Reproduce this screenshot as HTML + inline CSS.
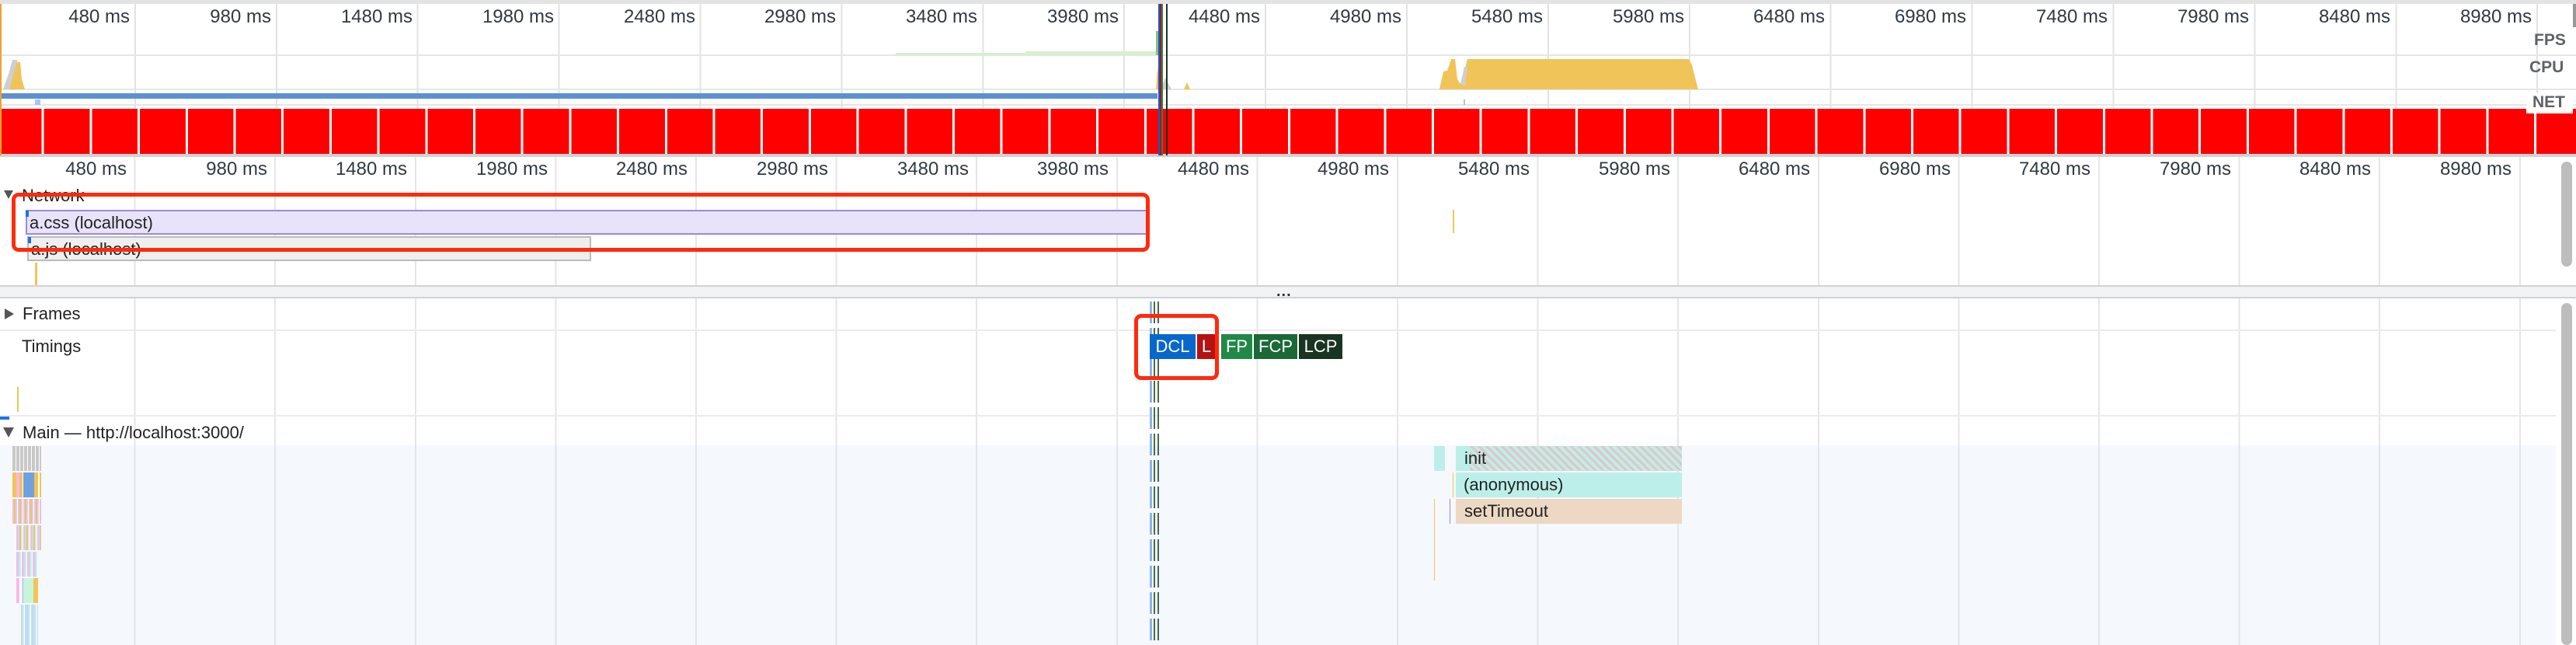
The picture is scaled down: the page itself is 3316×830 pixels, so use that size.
<!DOCTYPE html>
<html><head><meta charset="utf-8"><style>
*{margin:0;padding:0;box-sizing:border-box}
body{width:3316px;height:830px;overflow:hidden;background:#fff;position:relative;font-family:"Liberation Sans",sans-serif;color:#333}
.a{position:absolute}
.lbl{position:absolute;font-size:24px;color:#303942;text-align:right;width:120px;line-height:24px}
.t{font-size:22px;color:#222;position:absolute;line-height:24px}
.mk{position:absolute;top:430px;height:32px;color:#fff;font-size:22px;line-height:32px;text-align:center}
</style></head><body>
<!-- top border -->
<div class="a" style="left:0;top:0;width:3316px;height:5px;background:#e3e3e3"></div>
<!-- overview grid -->
<div class="a" style="left:-6.9px;top:5px;width:3300px;height:195px;background:repeating-linear-gradient(to right,transparent 0 179.9px,#e2e2e2 179.9px 181.9px)"></div>
<div class="a" style="left:0;top:70px;width:3316px;height:2px;background:#e6e6e6"></div>
<div class="a" style="left:0;top:114px;width:3316px;height:2px;background:#e6e6e6"></div>
<div class="a" style="left:0;top:134px;width:3316px;height:2px;background:#e6e6e6"></div>
<!-- top labels -->
<div class="lbl" style="left:47px;top:10px">480 ms</div>
<div class="lbl" style="left:229px;top:10px">980 ms</div>
<div class="lbl" style="left:411px;top:10px">1480 ms</div>
<div class="lbl" style="left:593px;top:10px">1980 ms</div>
<div class="lbl" style="left:775px;top:10px">2480 ms</div>
<div class="lbl" style="left:956px;top:10px">2980 ms</div>
<div class="lbl" style="left:1138px;top:10px">3480 ms</div>
<div class="lbl" style="left:1320px;top:10px">3980 ms</div>
<div class="lbl" style="left:1502px;top:10px">4480 ms</div>
<div class="lbl" style="left:1684px;top:10px">4980 ms</div>
<div class="lbl" style="left:1866px;top:10px">5480 ms</div>
<div class="lbl" style="left:2048px;top:10px">5980 ms</div>
<div class="lbl" style="left:2229px;top:10px">6480 ms</div>
<div class="lbl" style="left:2411px;top:10px">6980 ms</div>
<div class="lbl" style="left:2593px;top:10px">7480 ms</div>
<div class="lbl" style="left:2775px;top:10px">7980 ms</div>
<div class="lbl" style="left:2957px;top:10px">8480 ms</div>
<div class="lbl" style="left:3139px;top:10px">8980 ms</div>
<!-- FPS green -->
<div class="a" style="left:1153px;top:68px;width:337px;height:3px;background:#d6f0d0"></div>
<div class="a" style="left:1320px;top:66px;width:170px;height:5px;background:#d6f0d0"></div>
<div class="a" style="left:1488px;top:40px;width:3px;height:31px;background:#7dc77d"></div>
<!-- CPU -->
<svg class="a" style="left:0;top:72px" width="3316" height="44">
<path d="M4,43 L12,20 L16,5 L22,5 L30,43Z" fill="#cfcfcf"/>
<path d="M12,43 L18,22 L22,8 L26,8 L28,30 L32,43Z" fill="#f0c458"/>
<path d="M1488,43 L1490,15 L1494,43Z" fill="#f0c458"/>
<path d="M1494,43 L1500,28 L1508,43Z" fill="#cfcfcf"/>
<path d="M1524,43 L1528,34 L1532,43Z" fill="#f0c458"/>
<path d="M1853,43 L1858,20 L1863,19 L1868,4 L1873,4 L1876,30 L1880,36 L1885,20 L1889,4 L2174,4 L2178,12 L2186,43Z" fill="#f0c458"/>
<path d="M1880,36 L1885,14 L1889,14 L1886,40Z" fill="#cfcfcf"/>
</svg>
<!-- NET -->
<div class="a" style="left:0;top:120px;width:1490px;height:7px;background:#5b8fd6"></div>
<div class="a" style="left:45px;top:128px;width:7px;height:7px;background:#a6c6f5"></div>
<div class="a" style="left:1884px;top:128px;width:2px;height:7px;background:#a6c6f5"></div>
<!-- screenshots -->
<div class="a" style="left:0;top:140px;width:3316px;height:58px;background:repeating-linear-gradient(to right,#ff0000 0 58.7px,#fff 58.7px 61.7px);background-position:-5px 0"></div>
<div class="a" style="left:0;top:198px;width:3316px;height:4px;background:#d0d3d6"></div>
<div class="a" style="left:0;top:5px;width:2px;height:195px;background:#f0a030"></div>
<!-- track labels -->
<div class="a" style="left:3262px;top:40px;font-weight:bold;font-size:21px;color:#5f6368">FPS</div>
<div class="a" style="left:3256px;top:75px;font-weight:bold;font-size:21px;color:#5f6368">CPU</div>
<div class="a" style="left:3252px;top:120px;width:60px;height:26px;background:#fff"></div>
<div class="a" style="left:3260px;top:120px;font-weight:bold;font-size:21px;color:#5f6368">NET</div>
<div class="a" style="left:3312px;top:5px;width:4px;height:30px;background:#999"></div>
<!-- selection lines -->
<div class="a" style="left:1491px;top:5px;width:2px;height:195px;background:#1a56d6"></div>
<div class="a" style="left:1493px;top:5px;width:2px;height:195px;background:#b31412"></div>
<div class="a" style="left:1495px;top:5px;width:2px;height:195px;background:#228847"></div>
<div class="a" style="left:1501px;top:5px;width:2px;height:195px;background:#1a3422"></div>
<!-- lower grid -->
<div class="a" style="left:-5.6px;top:202px;width:3300px;height:166px;background:repeating-linear-gradient(to right,transparent 0 178.6px,#e6e6e6 178.6px 180.6px)"></div>
<div class="a" style="left:-5.6px;top:383px;width:3300px;height:447px;background:repeating-linear-gradient(to right,transparent 0 178.6px,#e6e6e6 178.6px 180.6px)"></div>
<!-- second ruler -->
<div class="lbl" style="left:43px;top:206px">480 ms</div>
<div class="lbl" style="left:224px;top:206px">980 ms</div>
<div class="lbl" style="left:404px;top:206px">1480 ms</div>
<div class="lbl" style="left:585px;top:206px">1980 ms</div>
<div class="lbl" style="left:765px;top:206px">2480 ms</div>
<div class="lbl" style="left:946px;top:206px">2980 ms</div>
<div class="lbl" style="left:1127px;top:206px">3480 ms</div>
<div class="lbl" style="left:1307px;top:206px">3980 ms</div>
<div class="lbl" style="left:1488px;top:206px">4480 ms</div>
<div class="lbl" style="left:1668px;top:206px">4980 ms</div>
<div class="lbl" style="left:1849px;top:206px">5480 ms</div>
<div class="lbl" style="left:2030px;top:206px">5980 ms</div>
<div class="lbl" style="left:2210px;top:206px">6480 ms</div>
<div class="lbl" style="left:2391px;top:206px">6980 ms</div>
<div class="lbl" style="left:2571px;top:206px">7480 ms</div>
<div class="lbl" style="left:2752px;top:206px">7980 ms</div>
<div class="lbl" style="left:2932px;top:206px">8480 ms</div>
<div class="lbl" style="left:3113px;top:206px">8980 ms</div>
<div class="a" style="left:3297px;top:208px;width:14px;height:135px;border-radius:7px;background:#bdbdbd"></div>
<!-- network -->
<div class="a" style="left:5px;top:245px;width:0;height:0;border-left:6px solid transparent;border-right:6px solid transparent;border-top:11px solid #555"></div>
<div class="t" style="left:28px;top:240px">Network</div>
<div class="a" style="left:33px;top:270px;width:1444px;height:32px;background:#e8e3f8;border:2px solid #9d87dc"></div>
<div class="a" style="left:33px;top:271px;width:4px;height:8px;background:#1a73e8"></div>
<div class="t" style="left:38px;top:275px">a.css (localhost)</div>
<div class="a" style="left:35px;top:304px;width:726px;height:32px;background:#efefef;border:2px solid #bbb"></div>
<div class="a" style="left:36px;top:305px;width:4px;height:8px;background:#1a73e8"></div>
<div class="t" style="left:40px;top:309px">a.js (localhost)</div>
<div class="a" style="left:45px;top:338px;width:3px;height:29px;background:#f0c458"></div>
<div class="a" style="left:1870px;top:270px;width:2px;height:30px;background:#f0c458"></div>
<div class="a" style="left:15px;top:248px;width:1465px;height:76px;border:5px solid #ff2a0c;border-radius:9px"></div>
<!-- divider -->
<div class="a" style="left:0;top:367px;width:3316px;height:2px;background:#d0d3d6"></div>
<div class="a" style="left:0;top:369px;width:3316px;height:13px;background:#f1f3f4"></div>
<div class="a" style="left:0;top:382px;width:3316px;height:2px;background:#d0d3d6"></div>
<div class="a" style="left:1643px;top:364px;font-size:20px;font-weight:bold;color:#333;letter-spacing:1px">...</div>
<!-- frames/timings -->
<div class="a" style="left:6px;top:397px;width:0;height:0;border-top:7px solid transparent;border-bottom:7px solid transparent;border-left:12px solid #555"></div>
<div class="t" style="left:29px;top:392px">Frames</div>
<div class="a" style="left:0;top:424px;width:3290px;height:2px;background:#ececec"></div>
<div class="t" style="left:28px;top:434px">Timings</div>
<div class="a" style="left:22px;top:498px;width:2px;height:32px;background:#f0c458"></div>
<div class="a" style="left:0;top:534px;width:3290px;height:2px;background:#ececec"></div>
<div class="a" style="left:0;top:536px;width:12px;height:4px;background:#1a73e8"></div>
<div class="a" style="left:4px;top:550px;width:0;height:0;border-left:7px solid transparent;border-right:7px solid transparent;border-top:13px solid #555"></div>
<div class="t" style="left:29px;top:545px">Main — http://localhost:3000/</div>
<div class="a" style="left:0;top:573px;width:3290px;height:257px;background:#f5f8fd"></div>
<div class="a" style="left:-5.6px;top:573px;width:3290px;height:257px;background:repeating-linear-gradient(to right,transparent 0 178.6px,#e3e5e8 178.6px 180.6px)"></div>
<div class="a" style="left:3297px;top:390px;width:14px;height:440px;border-radius:7px;background:#bdbdbd"></div>
<!-- left flame -->
<div class="a" style="left:16px;top:574px;width:37px;height:32px;background:repeating-linear-gradient(to right,#c8c8c8 0 4px,#fff 4px 5px)"></div>
<div class="a" style="left:16px;top:608px;width:37px;height:32px;background:linear-gradient(to right,#f0c458 0 5px,#f7b9e9 5px 9px,#f0c458 9px 13px,#fff 13px 14px,#6fa1e0 14px 28px,#f0c458 28px 33px,#fff 33px 35px,#f0c458 35px 37px)"></div>
<div class="a" style="left:16px;top:642px;width:37px;height:32px;background:repeating-linear-gradient(to right,#f7b9e9 0 2px,#f0c458 2px 4px,#c5d8f8 4px 6px,#fff 6px 7px)"></div>
<div class="a" style="left:21px;top:676px;width:32px;height:32px;background:repeating-linear-gradient(to right,#f7b9e9 0 2px,#c5d8f8 2px 4px,#f0c458 4px 6px,#c8f5d8 6px 8px,#fff 8px 9px)"></div>
<div class="a" style="left:21px;top:710px;width:28px;height:32px;background:repeating-linear-gradient(to right,#f7b9e9 0 2px,#c5d8f8 2px 4px,#c8f5d8 4px 6px,#fff 6px 7px)"></div>
<div class="a" style="left:21px;top:744px;width:28px;height:32px;background:linear-gradient(to right,#f7b9e9 0 4px,#fff 4px 7px,#c5d8f8 7px 10px,#c8f5d8 10px 22px,#f0c458 22px 28px)"></div>
<div class="a" style="left:27px;top:778px;width:22px;height:52px;background:repeating-linear-gradient(to right,#c5d8f8 0 2px,#c8f5d8 2px 4px,#fff 4px 5px,#c5d8f8 5px 8px)"></div>
<!-- dashed lines -->
<div class="a" style="left:1480px;top:388px;width:3px;height:442px;background:repeating-linear-gradient(#8cb4ec 0 28px,transparent 28px 34px)"></div>
<div class="a" style="left:1485px;top:388px;width:2px;height:442px;background:repeating-linear-gradient(#4a6a4a 0 28px,transparent 28px 34px)"></div>
<div class="a" style="left:1490px;top:388px;width:2px;height:442px;background:repeating-linear-gradient(#4a6a4a 0 28px,transparent 28px 34px)"></div>
<!-- timing markers -->
<div class="mk" style="left:1480px;width:59px;background:#0867cb">DCL</div>
<div class="mk" style="left:1541px;width:24px;background:#b31412">L</div>
<div class="mk" style="left:1572px;width:40px;background:#228847">FP</div>
<div class="mk" style="left:1614px;width:56px;background:#1a6937">FCP</div>
<div class="mk" style="left:1672px;width:56px;background:#1a3422">LCP</div>
<div class="a" style="left:1460px;top:404px;width:109px;height:85px;border:5px solid #ff2a0c;border-radius:9px"></div>
<!-- flame middle -->
<div class="a" style="left:1846px;top:574px;width:14px;height:32px;background:#bcefe9"></div>
<div class="a" style="left:1874px;top:574px;width:291px;height:32px;background:repeating-linear-gradient(45deg,#e4c4c4 0 3px,#bcefe9 3px 7px)"></div>
<div class="a" style="left:1874px;top:574px;width:18px;height:32px;background:#bcefe9"></div>
<div class="t" style="left:1885px;top:578px">init</div>
<div class="a" style="left:1874px;top:608px;width:291px;height:32px;background:#bcefe9"></div>
<div class="t" style="left:1884px;top:612px">(anonymous)</div>
<div class="a" style="left:1874px;top:642px;width:291px;height:32px;background:#ecd8c3"></div>
<div class="t" style="left:1885px;top:646px">setTimeout</div>
<div class="a" style="left:1846px;top:642px;width:1px;height:105px;background:#f0c458"></div>
<div class="a" style="left:1870px;top:608px;width:1px;height:32px;background:#f0c458"></div>
<div class="a" style="left:1866px;top:642px;width:1px;height:32px;background:#9d87dc"></div>
</body></html>
